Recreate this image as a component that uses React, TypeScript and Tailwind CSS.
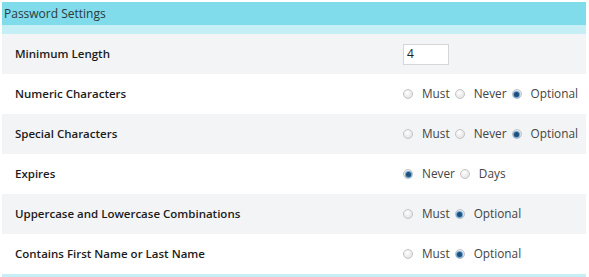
import React from "react";

function Radio({ checked }: { checked?: boolean }) {
  return (
    <span className="inline-flex h-[10px] w-[10px] items-center justify-center rounded-full border border-[#c4c4c4] bg-[radial-gradient(circle_at_40%_35%,#ffffff,#dcdcdc)]">
      {checked && <span className="h-[5px] w-[5px] rounded-full bg-[#1f4f7a] shadow-[0_0_1px_1px_#5b9bd0]" />}
    </span>
  );
}

function Opt({ label, checked }: { label: string; checked?: boolean }) {
  return (
    <span className="flex items-center">
      <Radio checked={checked} />
      <span className="ml-[9px] mr-[5px]">{label}</span>
    </span>
  );
}

type Row = { label: string; right: React.ReactNode };

export default function App() {
  const rows: Row[] = [
    {
      label: "Minimum Length",
      right: (
        <div className="flex h-[21px] w-[46px] items-center border border-[#d6d6d6] bg-white pl-[3px] text-[12px] text-[#222]">4</div>
      ),
    },
    {
      label: "Numeric Characters",
      right: (
        <>
          <Opt label="Must" />
          <Opt label="Never" />
          <Opt label="Optional" checked />
        </>
      ),
    },
    {
      label: "Special Characters",
      right: (
        <>
          <Opt label="Must" />
          <Opt label="Never" />
          <Opt label="Optional" checked />
        </>
      ),
    },
    {
      label: "Expires",
      right: (
        <>
          <Opt label="Never" checked />
          <Opt label="Days" />
        </>
      ),
    },
    {
      label: "Uppercase and Lowercase Combinations",
      right: (
        <>
          <Opt label="Must" />
          <Opt label="Optional" checked />
        </>
      ),
    },
    {
      label: "Contains First Name or Last Name",
      right: (
        <>
          <Opt label="Must" />
          <Opt label="Optional" checked />
        </>
      ),
    },
  ];
  return (
    <div className="h-[277px] w-[589px] bg-white pt-[2px] pl-[2px] font-['Open_Sans',sans-serif]">
      <div className="w-[584px]">
        <div className="flex h-[23px] items-center bg-[#80dbea] pl-[2px] text-[12px] text-[#2a3a40]">Password Settings</div>
        <div className="h-[9px] bg-[#c6eef5]" />
        {rows.map((r, i) => (
          <div
            key={r.label}
            className={`flex h-[40px] items-center ${i % 2 === 0 ? "bg-[#f2f4f5]" : "bg-white"}`}
          >
            <div className="w-[401px] pl-[13px] text-[11.5px] font-semibold text-[#1c1c1c]">{r.label}</div>
            <div className="flex items-center text-[11.8px] text-[#444]">{r.right}</div>
          </div>
        ))}
        <div className="h-[5px] bg-[#c6eef5]" />
      </div>
    </div>
  );
}
